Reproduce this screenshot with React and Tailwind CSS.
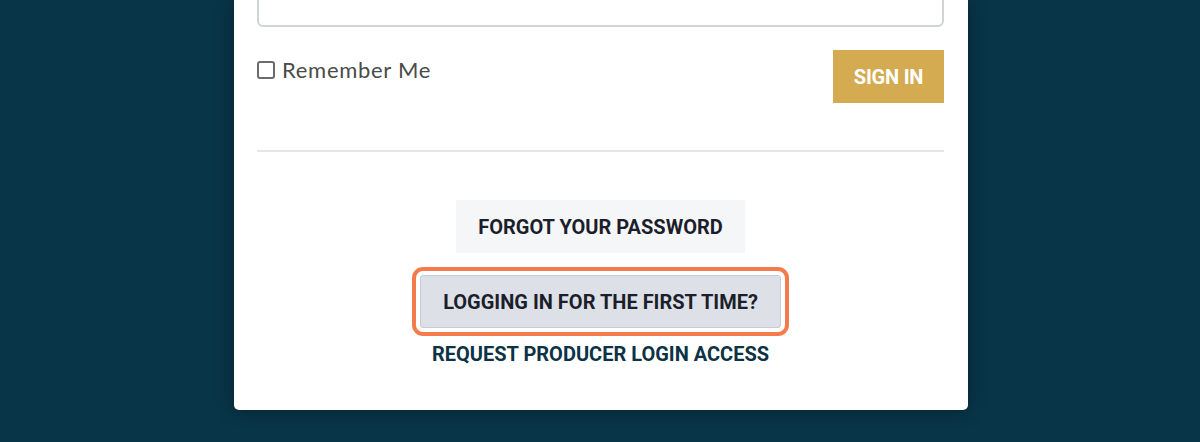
export default function App() {
  return (
    <div className="min-h-screen h-[442px] overflow-hidden bg-[#083547] flex justify-center pl-[2px]">
      <div className="w-[734px] h-[410px] bg-white rounded-b-[5px] shadow-[0_0_18px_rgba(0,0,0,0.35)] pl-[23px] pr-[24px] flex flex-col">
        {/* password input, cut off at the top */}
        <div className="h-[52px] -mt-[25px] shrink-0 rounded-[6px] border-2 border-[#cfd4db] bg-white" />

        {/* remember me + sign in */}
        <div className="mt-[23px] flex items-start justify-between">
          <label className="mt-[9px] flex items-center gap-[7px] text-[22px] leading-[21px] tracking-[0.7px] text-[#4a4a4a] font-['Lato',sans-serif]">
            <span className="w-[18px] h-[18px] rounded-[3px] border-2 border-[#6b6b6b] bg-white" />
            Remember Me
          </label>
          <button className="w-[111px] h-[53px] bg-[#d4ab51] text-white text-[20px] font-bold tracking-[-0.2px] font-['Roboto',sans-serif]">
            SIGN IN
          </button>
        </div>

        <div className="mt-[47px] h-[2px] bg-[#e4e6e9]" />

        {/* secondary actions */}
        <div className="mt-[48px] flex flex-col items-center font-['Roboto',sans-serif] font-bold text-[20px] text-[#1c1f2b]">
          <button className="h-[53px] px-[22px] bg-[#f5f6f8]">FORGOT YOUR PASSWORD</button>
          <button className="mt-[22px] h-[53px] px-[22px] bg-[#dde1e7] border border-[#c7ccd4] rounded-[3px] outline-[4px] outline-solid outline-[#f47c4c] outline-offset-[4px]">
            LOGGING IN FOR THE FIRST TIME?
          </button>
          <a className="mt-[14px] leading-[24px] text-[#0c3345]">REQUEST PRODUCER LOGIN ACCESS</a>
        </div>
      </div>
    </div>
  );
}
